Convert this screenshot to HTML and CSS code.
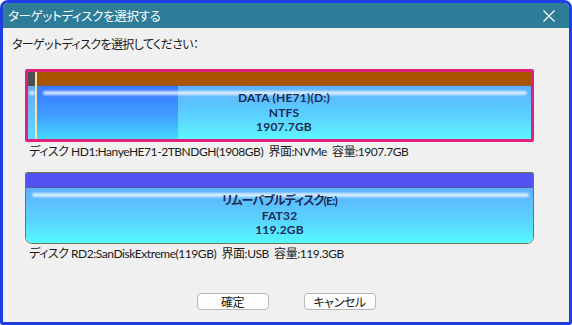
FILE: index.html
```html
<!DOCTYPE html>
<html lang="ja">
<head>
    <meta charset="UTF-8">
    <title>ターゲットディスクを選択する</title>
    <link rel="stylesheet" href="styles.css">
</head>
<body>
    <div class="window">
        <div class="titlebar">
            <span class="title">ターゲットディスクを選択する</span>
            <svg class="close" width="12" height="12" viewBox="0 0 12 12">
                <path d="M0.5 0.5 L11.5 11.5 M11.5 0.5 L0.5 11.5" stroke="#fff" stroke-width="1.2" fill="none"/>
            </svg>
        </div>
        <div class="content">
            <div class="prompt">ターゲットディスクを選択してください：</div>

            <div class="disks">
                <div class="disk disk-selected">
                    <div class="col col-sys">
                        <div class="bar bar-gray"></div>
                        <div class="part part-sys"></div>
                    </div>
                    <div class="col col-line"></div>
                    <div class="col col-main">
                        <div class="bar bar-brown"></div>
                        <div class="part part-data">
                            <div class="label">DATA (HE71)(D:)</div>
                            <div class="label">NTFS</div>
                            <div class="label">1907.7GB</div>
                        </div>
                    </div>
                </div>
                <div class="info">ディスク HD1:HanyeHE71-2TBNDGH(1908GB)&nbsp; 界面:NVMe&nbsp; 容量:1907.7GB</div>

                <div class="disk disk-usb">
                    <div class="col col-main">
                        <div class="bar bar-blue"></div>
                        <div class="part part-free">
                            <div class="label label-jp">リムーバブルディスク(E:)</div>
                            <div class="label">FAT32</div>
                            <div class="label">119.2GB</div>
                        </div>
                    </div>
                </div>
                <div class="info">ディスク RD2:SanDiskExtreme(119GB)&nbsp; 界面:USB&nbsp; 容量:119.3GB</div>
            </div>

            <div class="buttons">
                <button class="btn">確定</button>
                <button class="btn">キャンセル</button>
            </div>
        </div>
    </div>
</body>
</html>
```

FILE: styles.css
```css
html, body {
    margin: 0;
    padding: 0;
}
body {
    width: 572px;
    height: 325px;
    font-family: Lato, "Noto Sans CJK JP", sans-serif;
    font-size: 12px;
    font-feature-settings: "palt";
    color: #1a1a1a;
}
.window {
    box-sizing: border-box;
    width: 572px;
    height: 325px;
    border: 3px solid #1f3ee2;
    border-radius: 8px 8px 3px 3px;
    background: #f0f0f0;
    display: flex;
    flex-direction: column;
    overflow: hidden;
}
.titlebar {
    height: 25px;
    flex: none;
    background: #2e7d98;
    color: #fff;
    display: flex;
    align-items: center;
    justify-content: space-between;
    padding: 0 14px 0 5px;
}
.title {
    font-family: "Noto Sans CJK JP", sans-serif;
    font-size: 12.5px;
    letter-spacing: -0.3px;
}
.close {
    display: block;
}
.content {
    flex: 1;
    padding: 8px 9px 0 9px;
    display: flex;
    flex-direction: column;
}
.prompt {
    line-height: 16px;
    font-family: "Noto Sans CJK JP", sans-serif;
    letter-spacing: -0.6px;
}
.disks {
    margin: 17px 0 0 13px;
    width: 509px;
}
.disk {
    box-sizing: border-box;
    display: flex;
    background: #fff;
}
.disk-selected {
    height: 73px;
    border: 3px solid #e0207c;
    border-radius: 2px;
}
.disk-usb {
    height: 72px;
    margin-top: 12px;
    border: 1px solid #6f7a4a;
    border-radius: 2px 2px 7px 7px;
    overflow: hidden;
}
.col {
    display: flex;
    flex-direction: column;
}
.col-sys {
    width: 7px;
}
.col-line {
    width: 2px;
    background: #ece4a8;
}
.col-main {
    flex: 1;
}
.bar {
    height: 14px;
    flex: none;
}
.bar-gray {
    background: #4e4e4e;
}
.bar-brown {
    background: #a95500;
    border-bottom: 1px solid #8a5a30;
    height: 13px;
}
.bar-blue {
    height: 14px;
    background: #5252f0;
    border-bottom: 1px solid #5a5a9a;
}
.part {
    flex: 1;
    position: relative;
    display: flex;
    flex-direction: column;
    align-items: center;
    justify-content: center;
    padding-top: 1px;
}
.part::before {
    content: "";
    position: absolute;
    left: 6px;
    right: 4px;
    top: 5px;
    height: 4px;
    border-radius: 3px;
    background: rgba(255, 255, 255, 0.75);
    filter: blur(1px);
}
.part-sys {
    background: linear-gradient(#6ea8f0, #5ed8ff);
}
.part-sys::before {
    left: 1px;
    right: 0;
}
.part-data {
    background:
        linear-gradient(#3b78ff, #3f9cff 55%, #48d8ff) 0 0 / 141px 100% no-repeat,
        linear-gradient(#5fb0ff, #5ad0ff 55%, #5ef6ff);
}
.part-free {
    background: linear-gradient(#5fb0ff, #5ad0ff 55%, #55f8ff);
}
.label {
    position: relative;
    line-height: 14.5px;
    font-size: 12px;
    font-weight: 700;
    color: #1c2b56;
    letter-spacing: 0.2px;
}
.label-jp {
    letter-spacing: -0.8px;
}
.info {
    line-height: 16px;
    margin: 2px 0 0 4px;
    letter-spacing: -0.45px;
}
.buttons {
    display: flex;
    justify-content: center;
    gap: 35px;
    margin-top: 31px;
    margin-left: -9px;
    margin-right: -9px;
}
.btn {
    width: 72px;
    height: 17px;
    padding: 0;
    background: #fdfdfd;
    border: 1px solid #b8b8b8;
    border-radius: 4px;
    font-family: "Noto Sans CJK JP", sans-serif;
    font-size: 12px;
    font-feature-settings: "palt";
    letter-spacing: -0.4px;
    line-height: 15px;
    color: #1a1a1a;
}
```
